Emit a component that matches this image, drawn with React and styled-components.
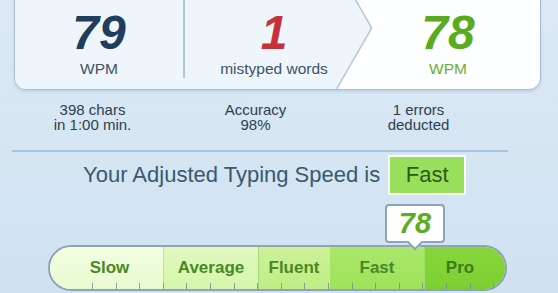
import React from "react";
import styled, { createGlobalStyle } from "styled-components";

const Global = createGlobalStyle`
  html, body { margin: 0; padding: 0; }
  body {
    width: 558px;
    height: 293px;
    overflow: hidden;
    font-family: "Liberation Sans", Arial, sans-serif;
    background: linear-gradient(180deg, #dce9f5 0%, #d6e6f3 45%, #d0e2f1 100%);
  }
`;

const Page = styled.div`
  width: 558px;
  height: 293px;
  overflow: hidden;
`;

const Card = styled.div`
  position: relative;
  box-sizing: border-box;
  margin: -34px 17px 0 14px;
  height: 124px;
  border: 1.5px solid #a8bccd;
  border-radius: 12px;
  background: #fdfeff;
  overflow: hidden;
  box-shadow: 0 2px 3px rgba(120, 150, 180, 0.25);
`;

const CardShape = styled.svg`
  position: absolute;
  left: 0;
  top: 0;
  width: 100%;
  height: 100%;
`;

const Metrics = styled.div`
  position: relative;
  display: grid;
  grid-template-columns: 170px 178px 1fr;
  align-items: start;
`;

const Metric = styled.div`
  box-sizing: border-box;
  height: ${(p) => (p.$divider ? "111px" : "auto")};
  padding: 42px ${(p) => (p.$padRight ? "7px" : "0")} 0 0;
  display: flex;
  flex-direction: column;
  align-items: center;
  border-right: ${(p) => (p.$divider ? "2px solid #b3c6d7" : "none")};
`;

const Number = styled.div`
  font-size: 48px;
  line-height: 48px;
  font-weight: 700;
  font-style: italic;
  color: ${(p) => p.$color};
`;

const Unit = styled.div`
  margin-top: 3px;
  font-size: 15.5px;
  line-height: 18px;
  color: ${(p) => p.$color || "#3e5366"};
`;

const Stats = styled.div`
  display: grid;
  grid-template-columns: repeat(3, 163px);
  margin: 11.5px 0 0 11px;
`;

const Stat = styled.div`
  display: flex;
  flex-direction: column;
  align-items: center;
  font-size: 15px;
  line-height: 15.5px;
  color: #2f3f4d;
`;

const StatLine = styled.span`
  display: block;
`;

const Rule = styled.div`
  margin: 17.5px 0 0 12px;
  width: 496px;
  height: 2px;
  background: #a8c6df;
`;

const Headline = styled.div`
  display: flex;
  align-items: center;
  gap: 8px;
  margin-top: 3px;
  padding-left: 83px;
`;

const HeadText = styled.div`
  font-size: 22px;
  line-height: 40px;
  color: #3b586e;
`;

const Badge = styled.div`
  box-sizing: border-box;
  height: 40px;
  padding: 0 15.5px;
  border: 2px solid #fbfef8;
  background: #98e05b;
  font-size: 22px;
  line-height: 36px;
  color: #2c5a1d;
`;

const BarWrap = styled.div`
  position: relative;
  margin: 50px 0 0 48px;
  width: 459px;
  height: 46px;
`;

const Bar = styled.div`
  box-sizing: border-box;
  display: flex;
  width: 100%;
  height: 100%;
  border: 2px solid #8ea3b5;
  border-radius: 23px;
  overflow: hidden;
  box-shadow: inset 0 0 0 1.5px rgba(255, 255, 255, 0.55);
`;

const Segment = styled.div`
  box-sizing: border-box;
  flex: 0 0 ${(p) => p.$w}px;
  display: flex;
  align-items: center;
  justify-content: center;
  padding: 0 ${(p) => p.$pr || 0}px 0 ${(p) => p.$pl || 0}px;
  background: ${(p) => p.$bg};
  border-left: ${(p) => (p.$line ? `1px solid ${p.$line}` : "none")};
  font-size: 17px;
  font-weight: 700;
  color: ${(p) => p.$fg || "#4a8926"};
`;

const Ticks = styled.div`
  position: absolute;
  left: 44px;
  right: 10px;
  bottom: 2px;
  height: 6px;
  background: repeating-linear-gradient(
    to right,
    #7b8c99 0,
    #7b8c99 1px,
    transparent 1px,
    transparent 23.6px
  );
  opacity: 0.85;
`;

const Tooltip = styled.div`
  position: absolute;
  left: 337px;
  top: -41px;
  box-sizing: border-box;
  width: 60px;
  height: 39px;
  background: #ffffff;
  border: 2px solid #8ea3b5;
  border-radius: 4px;
  display: flex;
  align-items: center;
  justify-content: center;
  font-size: 29px;
  font-weight: 700;
  font-style: italic;
  color: #5cad21;

  &::after {
    content: "";
    position: absolute;
    left: 50%;
    bottom: -7px;
    width: 10px;
    height: 10px;
    margin-left: -6px;
    background: #ffffff;
    border-right: 2px solid #8ea3b5;
    border-bottom: 2px solid #8ea3b5;
    transform: rotate(45deg);
  }
`;

const segments = [
  { label: "Slow", w: 113, bg: "linear-gradient(180deg,#f2fde2,#e8fbcf)", pl: 6 },
  { label: "Average", w: 95, bg: "linear-gradient(180deg,#e0f9bf,#d5f6aa)", line: "#c4d9b4" },
  { label: "Fluent", w: 71, bg: "linear-gradient(180deg,#cbf297,#bfee85)", line: "#a9d57a" },
  { label: "Fast", w: 95, bg: "linear-gradient(180deg,#aae76a,#9ee35b)", line: "#c3ef96" },
  { label: "Pro", w: 81, bg: "linear-gradient(180deg,#87d63c,#7bd030)", line: "#9ee062", pr: 10, fg: "#3f7a1c" },
];

const stats = [
  ["398 chars", "in 1:00 min."],
  ["Accuracy", "98%"],
  ["1 errors", "deducted"],
];

export default function App() {
  return (
    <Page>
      <Global />
      <Card>
        <CardShape viewBox="0 0 524 121" preserveAspectRatio="none">
          <polygon points="0,0 321,0 356,60.5 321,121 0,121" fill="#eef5fb" />
          <polyline points="321,0 356,60.5 321,121" fill="none" stroke="#b6c9d9" strokeWidth="1.5" />
        </CardShape>
        <Metrics>
          <Metric $divider>
            <Number $color="#1f3e5d">79</Number>
            <Unit>WPM</Unit>
          </Metric>
          <Metric>
            <Number $color="#c9313a">1</Number>
            <Unit>mistyped words</Unit>
          </Metric>
          <Metric $padRight>
            <Number $color="#5aab1d">78</Number>
            <Unit $color="#6aae2f">WPM</Unit>
          </Metric>
        </Metrics>
      </Card>
      <Stats>
        {stats.map(([a, b]) => (
          <Stat key={a}>
            <StatLine>{a}</StatLine>
            <StatLine>{b}</StatLine>
          </Stat>
        ))}
      </Stats>
      <Rule />
      <Headline>
        <HeadText>Your Adjusted Typing Speed is</HeadText>
        <Badge>Fast</Badge>
      </Headline>
      <BarWrap>
        <Bar>
          {segments.map((s) => (
            <Segment key={s.label} $w={s.w} $bg={s.bg} $line={s.line} $pl={s.pl} $pr={s.pr} $fg={s.fg}>
              {s.label}
            </Segment>
          ))}
        </Bar>
        <Ticks />
        <Tooltip>78</Tooltip>
      </BarWrap>
    </Page>
  );
}
